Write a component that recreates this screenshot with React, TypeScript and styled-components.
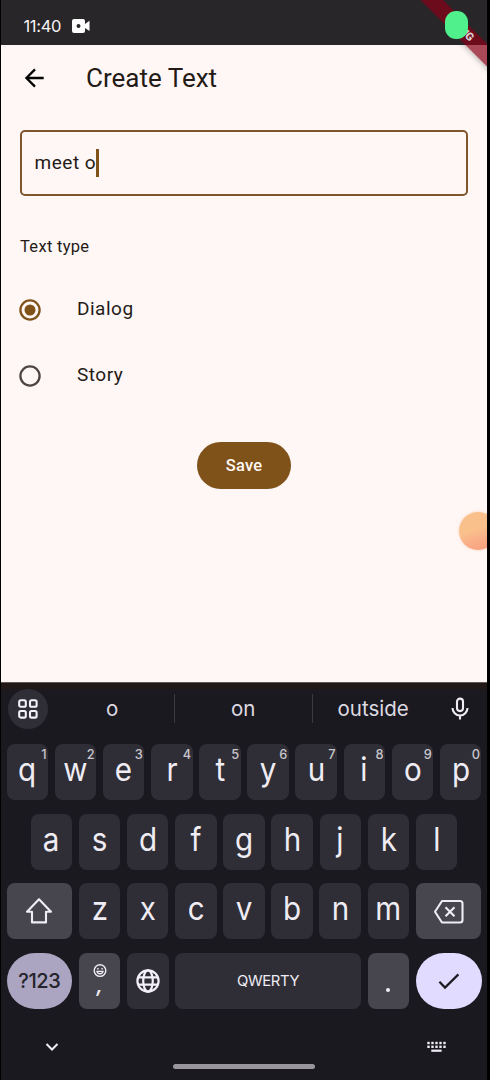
import React from "react";
import styled, { createGlobalStyle } from "styled-components";

const Global = createGlobalStyle`
  * { box-sizing: border-box; }
  body { margin: 0; background: #000; }
  svg { display: block; flex: none; }
`;

const Phone = styled.div`
  position: relative;
  display: flex;
  flex-direction: column;
  width: 486px;
  height: 1080px;
  margin-left: 1px;
  overflow: hidden;
  background: #fff7f5;
  color: #241b17;
  font-family: Roboto, sans-serif;
`;

const StatusBar = styled.header`
  display: flex;
  align-items: center;
  gap: 10.5px;
  height: 45px;
  padding: 7px 0 0 22.5px;
  background: #282628;
  color: #f6f3f4;
  font: 400 16.5px/20px Inter, sans-serif;
  letter-spacing: -0.35px;
`;

const AppBar = styled.div`
  display: flex;
  align-items: center;
  gap: 39px;
  height: 66px;
  padding-left: 21px;
`;

const Title = styled.h1`
  margin: 0;
  font-weight: 400;
  font-size: 26px;
  line-height: 32px;
`;

const Form = styled.main`
  display: flex;
  flex-direction: column;
  flex: 1;
  padding: 19px 19px 0;
`;

const Field = styled.div`
  display: flex;
  align-items: center;
  height: 66px;
  padding: 0 0 1px 12.6px;
  border: 2.4px solid #7f562b;
  border-radius: 5px;
  font-size: 19px;
  letter-spacing: 0.5px;
`;

const Caret = styled.span`
  width: 2.4px;
  height: 28px;
  background: #7f521a;
`;

const Label = styled.div`
  margin-top: 40px;
  font-size: 16.5px;
  line-height: 22px;
  letter-spacing: 0.3px;
`;

const Options = styled.div`
  display: flex;
  flex-direction: column;
  margin-top: 18.5px;
`;

const Option = styled.label`
  display: flex;
  align-items: center;
  gap: 36.4px;
  height: 66px;
  margin-left: -1.4px;
  font-size: 19px;
  letter-spacing: 0.5px;
`;

const OptionText = styled.span`
  margin-top: -1.5px;
`;

const Save = styled.button`
  align-self: center;
  width: 94px;
  height: 47px;
  margin-top: 33.5px;
  padding: 1px 0 0;
  border: 0;
  border-radius: 24px;
  background: #7f521a;
  color: #fff8f2;
  font: 500 16.5px/20px Roboto, sans-serif;
  letter-spacing: 0.15px;
`;

const Bubble = styled.div`
  position: absolute;
  top: 512px;
  left: 457.5px;
  width: 38px;
  height: 38px;
  border-radius: 50%;
  background: linear-gradient(160deg, #f9c08c 45%, #f9b088 65%, #f79b7b);
  box-shadow: 0 0 3px #f7b58c99;
`;

const BannerClip = styled.div`
  position: absolute;
  top: 0;
  right: 0;
  width: 90px;
  height: 90px;
  overflow: hidden;
`;

const Banner = styled.div`
  position: absolute;
  top: 18.2px;
  left: -4.5px;
  width: 130px;
  height: 15.5px;
  padding-left: 5px;
  transform: rotate(45deg);
  background: rgba(135, 0, 24, 0.71);
  color: #ded0d4;
  font: 900 11px/15.5px Roboto, sans-serif;
  letter-spacing: -0.4px;
  text-align: center;
`;

const BannerShadow = styled.div`
  position: absolute;
  top: 45px;
  right: 0;
  width: 50px;
  height: 50px;
  overflow: hidden;
  &::before {
    content: "";
    position: absolute;
    top: -26.8px;
    left: -44.5px;
    width: 130px;
    height: 15.5px;
    transform: rotate(45deg);
    box-shadow: 0 0 7px rgba(0, 0, 0, 0.4);
  }
`;

const RecordDot = styled.div`
  position: absolute;
  top: 10.5px;
  left: 444px;
  width: 23px;
  height: 28.5px;
  border-radius: 11px;
  background: #50f08c;
`;

const Keyboard = styled.section`
  display: flex;
  flex-direction: column;
  height: 398px;
  border-top: 1px solid #625957;
  background: linear-gradient(#211817 5px, #1b1920 7px);
  color: #ece8f0;
  font-family: Inter, sans-serif;
`;

const Suggestions = styled.div`
  display: flex;
  align-items: center;
  height: 51px;
  margin-bottom: 10px;
  padding-left: 6.6px;
`;

const GridButton = styled.div`
  display: flex;
  align-items: center;
  justify-content: center;
  width: 40px;
  height: 40px;
  margin-right: 3px;
  border-radius: 50%;
  background: #2f2e36;
`;

const Suggestion = styled.div<{ $w: number; $divided?: boolean }>`
  width: ${(p) => p.$w}px;
  height: 29px;
  border-right: ${(p) => (p.$divided ? "1px solid #3d3a3e" : "0")};
  color: #dedae1;
  font-size: 20.5px;
  line-height: 29px;
  text-align: center;
`;

const MicSlot = styled.div`
  margin-left: 14px;
`;

const KeyRow = styled.div<{ $inset?: number }>`
  display: flex;
  gap: 6.6px;
  height: 56px;
  margin-bottom: 13.7px;
  padding: 0 ${(p) => p.$inset ?? 5.5}px;
`;

type Tone = "plain" | "raised" | "symbols" | "enter";
const tones: Record<Tone, [string, string]> = {
  plain: ["#2f2e36", "#f0ecf4"],
  raised: ["#47464e", "#f0ecf4"],
  symbols: ["#aba5c1", "#25232b"],
  enter: ["#e0dbff", "#1d1b22"],
};

const Key = styled.div<{ $w?: number; $tone?: Tone; $round?: boolean }>`
  position: relative;
  display: flex;
  flex-direction: column;
  align-items: center;
  justify-content: center;
  flex: ${(p) => (p.$w ? `0 0 ${p.$w}px` : "1 1 0")};
  border-radius: ${(p) => (p.$round ? "28px" : "8px")};
  background: ${(p) => tones[p.$tone ?? "plain"][0]};
  color: ${(p) => tones[p.$tone ?? "plain"][1]};
`;

const Letter = styled.span`
  margin-top: -4px;
  font-size: 32.5px;
  line-height: 40px;
  transform: scaleX(0.91);
`;

const Hint = styled.span`
  position: absolute;
  top: 3px;
  right: 1.5px;
  color: #c8c4cc;
  font-size: 12.8px;
  font-weight: 500;
  line-height: 15px;
`;

const KeyText = styled.span<{ $size: number; $weight?: number; $track?: number }>`
  font-size: ${(p) => p.$size}px;
  font-weight: ${(p) => p.$weight ?? 400};
  letter-spacing: ${(p) => p.$track ?? 0}px;
`;

const Comma = styled.span`
  height: 20px;
  font: italic 600 20px/15px Inter, sans-serif;
`;

const Period = styled.span`
  width: 4px;
  height: 4px;
  margin-top: 18px;
  border-radius: 50%;
  background: #f0ecf4;
`;

const NavRow = styled.div`
  display: flex;
  justify-content: space-between;
  align-items: center;
  height: 20px;
  margin-top: 14px;
  padding: 0 40px 0 44px;
`;

const HomeBar = styled.div`
  align-self: center;
  width: 142px;
  height: 5px;
  margin-top: 7px;
  border-radius: 3px;
  background: #98969b;
`;

const row1 = "qwertyuiop".split("");
const row2 = "asdfghjkl".split("");
const row3 = "zxcvbnm".split("");

export default function App() {
  return (
    <>
      <Global />
      <Phone>
        <StatusBar>
          <span>11:40</span>
          <svg width="19" height="14" viewBox="0 0 19 14">
            <path fill="#fff" fillRule="evenodd" d="M2 0H11Q13 0 13 2V5L17.5 1.7V12L13 9V12Q13 14 11 14H2Q0 14 0 12V2Q0 0 2 0ZM6.5 5A2 2 0 1 0 6.5 9A2 2 0 1 0 6.5 5Z" />
          </svg>
        </StatusBar>
        <AppBar>
          <svg width="25" height="28" viewBox="0 0 25 28" fill="none" stroke="#050404" strokeWidth="2.3">
            <path d="M21.7 14H4.5M13 5.4L4.4 14L13 22.6" />
          </svg>
          <Title>Create Text</Title>
        </AppBar>
        <Form>
          <Field>
            meet o<Caret />
          </Field>
          <Label>Text type</Label>
          <Options>
            <Option>
              <svg width="22" height="22" viewBox="0 0 22 22" fill="none" stroke="#7f521a" strokeWidth="2.3">
                <circle cx="11" cy="11" r="9.6" />
                <circle cx="11" cy="11" r="5.5" fill="#7f521a" stroke="none" />
              </svg>
              <OptionText>Dialog</OptionText>
            </Option>
            <Option>
              <svg width="22" height="22" viewBox="0 0 22 22" fill="none" stroke="#4d4541" strokeWidth="2.3">
                <circle cx="11" cy="11" r="9.6" />
              </svg>
              <OptionText>Story</OptionText>
            </Option>
          </Options>
          <Save>Save</Save>
        </Form>
        <Keyboard>
          <Suggestions>
            <GridButton>
              <svg width="20" height="20" viewBox="0 0 20 20" fill="none" stroke="#f4f0f8" strokeWidth="2.1">
                <rect x="1.2" y="1.2" width="6.6" height="6.6" rx="1.6" />
                <rect x="12" y="1.2" width="6.6" height="6.6" rx="1.6" />
                <rect x="1.2" y="12" width="6.6" height="6.6" rx="1.6" />
                <rect x="12" y="12" width="6.6" height="6.6" rx="1.6" />
              </svg>
            </GridButton>
            <Suggestion $w={124} $divided>o</Suggestion>
            <Suggestion $w={138} $divided>on</Suggestion>
            <Suggestion $w={121}>outside</Suggestion>
            <MicSlot>
              <svg width="24" height="26" viewBox="0 0 24 26" fill="none" stroke="#f0ecf4" strokeWidth="2.1">
                <rect x="9" y="2.6" width="6" height="12.5" rx="3" />
                <path d="M4.5 12A7.5 7.5 0 0 0 19.5 12M12 19.5V23.5" />
              </svg>
            </MicSlot>
          </Suggestions>
          <KeyRow>
            {row1.map((c, i) => (
              <Key key={c}><Letter>{c}</Letter><Hint>{(i + 1) % 10}</Hint></Key>
            ))}
          </KeyRow>
          <KeyRow $inset={29.6}>
            {row2.map((c) => <Key key={c}><Letter>{c}</Letter></Key>)}
          </KeyRow>
          <KeyRow>
            <Key $w={65.7} $tone="raised">
              <svg width="30" height="30" viewBox="0 0 30 30" fill="none" stroke="#f0ecf4" strokeWidth="2.1" strokeLinejoin="round">
                <path d="M15 3.2L27 15.8H22V26.4H8V15.8H3Z" />
              </svg>
            </Key>
            {row3.map((c) => <Key key={c}><Letter>{c}</Letter></Key>)}
            <Key $w={65.7} $tone="raised">
              <svg width="32" height="26" viewBox="0 0 32 26" fill="none" stroke="#f0ecf4" strokeWidth="2.1" strokeLinejoin="round">
                <path d="M9 3H27Q29.5 3 29.5 5.5V22Q29.5 24.5 27 24.5H9L2 13.75ZM12.5 9.2L21.5 18.3M21.5 9.2L12.5 18.3" />
              </svg>
            </Key>
          </KeyRow>
          <KeyRow>
            <Key $w={65.7} $tone="symbols" $round><KeyText $size={20} $weight={500} $track={-0.4}>?123</KeyText></Key>
            <Key $w={41.6} $tone="raised">
              <svg width="14" height="14" viewBox="0 0 14 14" fill="none" stroke="#f0ecf4" strokeWidth="1.4">
                <circle cx="7" cy="6.6" r="5.8" />
                <path d="M4.9 4V5.5M9.1 4V5.5" />
                <path d="M4 7.4H10Q9.4 9.8 7 9.8T4 7.4Z" />
              </svg>
              <Comma>,</Comma>
            </Key>
            <Key $w={41.6}>
              <svg width="24" height="24" viewBox="0 0 24 24" fill="none" stroke="#f4f0f8" strokeWidth="2.2">
                <circle cx="12" cy="12" r="10.6" />
                <ellipse cx="12" cy="12" rx="4.8" ry="10.6" />
                <path d="M2 8.3H22M2 15.7H22" />
              </svg>
            </Key>
            <Key><KeyText $size={14.8} $track={-0.35}>QWERTY</KeyText></Key>
            <Key $w={41.6} $tone="raised"><Period /></Key>
            <Key $w={65.7} $tone="enter" $round>
              <svg width="24" height="20" viewBox="0 0 24 20" fill="none" stroke="#1d1b22" strokeWidth="2.2">
                <path d="M2.4 10.8L8 16.6L21.4 3.4" />
              </svg>
            </Key>
          </KeyRow>
          <NavRow>
            <svg width="14" height="10" viewBox="0 0 14 10" fill="none" stroke="#f0ecf4" strokeWidth="2">
              <path d="M1.5 2L7 7.5L12.5 2" />
            </svg>
            <svg width="20" height="12" viewBox="0 0 20 12" fill="#f0ecf4">
              {[0, 1, 2, 3, 4].map((i) => (
                <React.Fragment key={i}>
                  <rect x={0.3 + i * 4} y="0.8" width="2.4" height="2.4" />
                  <rect x={0.3 + i * 4} y="4.6" width="2.4" height="2.4" />
                </React.Fragment>
              ))}
              <rect x="4.3" y="8.6" width="10.3" height="2.2" />
            </svg>
          </NavRow>
          <HomeBar />
        </Keyboard>
        <Bubble />
        <BannerShadow />
        <BannerClip><Banner>DEBUG</Banner></BannerClip>
        <RecordDot />
      </Phone>
    </>
  );
}
